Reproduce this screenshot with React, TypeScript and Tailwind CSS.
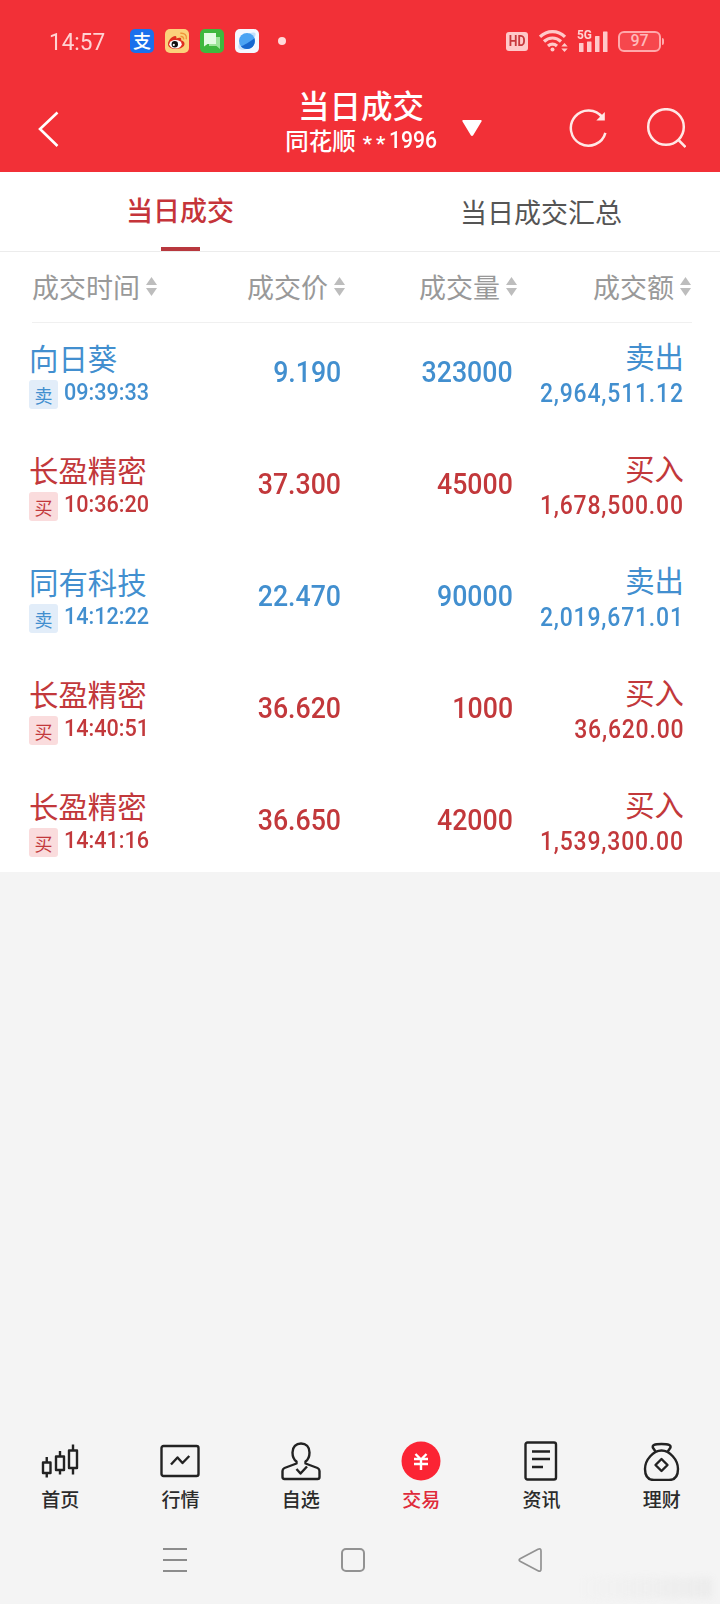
import React from 'react';
import clsx from 'clsx';

type Side = 'buy' | 'sell';

interface Trade {
  name: string;
  side: Side;
  time: string;
  price: string;
  volume: string;
  amount: string;
}

const trades: Trade[] = [
  { name: '向日葵', side: 'sell', time: '09:39:33', price: '9.190', volume: '323000', amount: '2,964,511.12' },
  { name: '长盈精密', side: 'buy', time: '10:36:20', price: '37.300', volume: '45000', amount: '1,678,500.00' },
  { name: '同有科技', side: 'sell', time: '14:12:22', price: '22.470', volume: '90000', amount: '2,019,671.01' },
  { name: '长盈精密', side: 'buy', time: '14:40:51', price: '36.620', volume: '1000', amount: '36,620.00' },
  { name: '长盈精密', side: 'buy', time: '14:41:16', price: '36.650', volume: '42000', amount: '1,539,300.00' },
];

const StatusBar = () => (
  <div className="flex h-[82px] items-center pl-[49px] pr-[56px] text-[#ffd3d3]">
    <span className="w-[81px] font-[Roboto] text-2xl leading-6">
      <span className="inline-block origin-left scale-x-[0.94] pt-px">14:57</span>
    </span>

    {/* Notification icons */}
    <div className="flex items-center gap-[11px]">
      <span className="flex h-6 w-6 items-center justify-center rounded-[5px] bg-[#1b70ec] text-[18px] leading-6 font-medium text-white">
        <span className="-mt-0.5">支</span>
      </span>
      <svg className="h-6 w-6" viewBox="0 0 24 24">
        <rect width="24" height="24" rx="5" fill="#fbd27b" />
        <path d="M3 15c0-4 5-8.500 7.500-8 1.300.3 1 2 .8 2.500 2-1 5-1.300 5 .5 0 .8-.3 1.200-.3 1.200 2 .5 3.500 1.500 3.500 3.600 0 3.200-4 5.200-8.500 5.200S3 18.200 3 15Z" fill="#e0301e" />
        <ellipse cx="10.500" cy="15.200" rx="6.200" ry="4.200" fill="#fff" />
        <circle cx="9.800" cy="15.200" r="3.200" fill="#111" />
        <circle cx="8.800" cy="15.900" r="1.100" fill="#fff" />
        <path d="M15.500 7.500c2-.4 3.500 1 3 3M15.300 4.300c4-.8 7 2.200 6 6" fill="none" stroke="#f0953a" strokeWidth="1.500" />
      </svg>
      <svg className="h-6 w-6" viewBox="0 0 24 24">
        <rect width="24" height="24" rx="5" fill="#3fb83e" />
        <path d="M9 8h11v12l-3.500-3H9Z" fill="#9ee59a" />
        <path d="M4 4h12v11H7.500L4 17.500Z" fill="#e4fbe3" />
      </svg>
      <svg className="h-6 w-6" viewBox="0 0 24 24">
        <rect width="24" height="24" rx="5" fill="#f4f8ff" />
        <path d="M4 19.500C2.500 18 3.500 15.500 5 13.500L12 20c-3 1.200-6.500 1-8-.5ZM14 4.500c3-1.500 6-1.500 6.500 0 .4 1.500-.3 3-1.500 5Z" fill="#c5e0fb" />
        <circle cx="12" cy="12" r="8" fill="#4ba3f3" />
        <path d="M6 17.300C12 15 17 11 19.400 9.200 21 14 18 20 12 20c-2.500 0-4.700-1-6-2.700Z" fill="#1767cf" />
      </svg>
      <span className="ml-[8px] h-2 w-2 rounded-full bg-[#ffdada]" />
    </div>

    {/* Network and battery */}
    <div className="ml-auto flex items-center">
      <span className="mr-[11px] flex h-[19px] w-[22px] items-center justify-center rounded-[3px] bg-[#ffc9c9] font-[Roboto] text-[15px] leading-none font-bold text-[#c8383d]">
        <span className="scale-x-[0.82]">HD</span>
      </span>
      <svg className="mr-[9px] h-6 w-[29px]" viewBox="0 0 29 24" fill="none" stroke="#ffc9c9" strokeWidth="3.200">
        <path d="M1 7.800c7-7 18-7 25 0M5 12.500c5-4.700 12-4.700 17 0M9 17c3-2.600 6-2.600 9 0" />
        <circle cx="13.500" cy="20.500" r="2" fill="#ffc9c9" stroke="none" />
        <path d="M22.300 17.500 25.500 14l3.200 3.500ZM22.300 19.500l3.200 3.500 3.200-3.500Z" fill="#ffc9c9" stroke="none" />
      </svg>
      <div className="relative mr-[10px] h-6 w-[31px]">
        <span className="absolute -top-px left-0 origin-left scale-x-[0.88] font-[Roboto] text-[13.500px] leading-3 font-bold">5G</span>
        <svg className="h-6 w-[31px]" viewBox="0 0 31 24" fill="#ffc9c9">
          <rect x="2" y="14" width="4.500" height="9" rx="0.500" />
          <rect x="10" y="12.500" width="4.500" height="10.500" rx="0.500" />
          <rect x="18" y="7" width="4.500" height="16" rx="0.500" />
          <rect x="26" y="2.500" width="4.500" height="20.500" rx="0.500" />
        </svg>
      </div>
      <span className="flex h-[21px] w-[43px] items-center justify-center rounded-[6px] border-2 border-[#ffa9ab] bg-[#f6474d] font-[Roboto] text-[16px] leading-none font-medium text-[#ffb9bb]">
        97
      </span>
      <span className="ml-px h-[7px] w-0.5 rounded-r bg-[#ffa9ab]" />
    </div>
  </div>
);

const TitleBar = () => (
  <div className="flex h-[90px] items-center pr-8 pl-[37px] text-white">
    <svg className="mt-[3px] h-9 w-6 shrink-0" viewBox="0 0 24 36" fill="none" stroke="#fff" strokeWidth="2.600">
      <path d="M20.500 1.500 3 18l17.500 17" />
    </svg>
    <div className="ml-[220px] flex w-[160px] shrink-0 flex-col items-center self-start pt-[3px]">
      <h1 className="text-[31.500px] leading-[38px] font-medium">当日成交</h1>
      <p className="mt-[3px] flex h-7 items-center gap-[7px] whitespace-nowrap text-[23.500px] leading-7 font-medium">
        <span>同花顺</span>
        <span className="flex w-[74px] items-center font-[Roboto]">
          <span className="mt-2 w-[27px] text-[21px] tracking-[4px]">**</span>
          <span className="origin-left scale-x-[0.88] text-2xl">1996</span>
        </span>
      </p>
    </div>
    <svg className="mt-[2px] ml-[21px] h-4 w-5 shrink-0" viewBox="0 0 20 16" fill="#fff">
      <path d="M1.500 0h17c1 0 1.500.8 1 1.600l-8.300 13.600c-.6 1-1.800 1-2.400 0L.5 1.600C0 .8.500 0 1.500 0Z" />
    </svg>
    <svg className="mt-[2px] ml-[86px] h-10 w-10 shrink-0" viewBox="0 0 40 40" fill="none" stroke="#ffe8e6" strokeWidth="2.500">
      <path d="M37.400 24.800A17.600 17.600 0 1 1 34.500 9.500" />
      <path d="M36.800 4v8.500h-8.500Z" fill="#ffe8e6" stroke="none" />
    </svg>
    <svg className="mt-[2px] ml-[38px] h-10 w-10 shrink-0" viewBox="0 0 40 40" fill="none" stroke="#ffe8e6" strokeWidth="2.500">
      <circle cx="20" cy="19" r="17.800" />
      <path d="m32 31.500 7.500 7.500" />
    </svg>
  </div>
);

const SortIcon = () => (
  <svg className="mb-[2px] ml-[6px] h-[19px] w-[11px]" viewBox="0 0 11 19" fill="#bdbdbd">
    <path d="M5.500 0 11 8H0ZM5.500 19 11 11H0Z" />
  </svg>
);

const ColumnTitle = ({ label }: { label: string }) => (
  <span className="flex items-center justify-end">
    <span>{label}</span>
    <SortIcon />
  </span>
);

const TradeRow = ({ trade }: { trade: Trade }) => {
  const sell = trade.side === 'sell';

  return (
    <li
      className={clsx(
        'grid h-[101px] grid-cols-[148px_164px_172px_171px] pl-[29px]',
        sell ? 'text-[#428fcf]' : 'text-[#c2383b]',
      )}
    >
      <div className="pt-[15px]">
        <div className="text-[29.400px] leading-[38px] whitespace-nowrap">{trade.name}</div>
        <div className="flex">
          <span
            className={clsx(
              'mt-[4px] flex h-[29px] w-[29px] shrink-0 items-center justify-center rounded-[3px] text-[18px] leading-none',
              sell ? 'bg-[#e2edf9]' : 'bg-[#fadcdd]',
            )}
          >
            {sell ? '卖' : '买'}
          </span>
          <span className="mt-[3px] ml-[6px] origin-left scale-x-[0.9] font-[Roboto] text-2xl leading-[27px] font-medium">
            {trade.time}
          </span>
        </div>
      </div>
      <div className="pt-[32px] text-right font-[Roboto] text-[29.500px] leading-[34px] font-medium">
        <span className="inline-block origin-right scale-x-[0.905]">{trade.price}</span>
      </div>
      <div className="pt-[32px] text-right font-[Roboto] text-[29.500px] leading-[34px] font-medium">
        <span className="inline-block origin-right scale-x-[0.905]">{trade.volume}</span>
      </div>
      <div className="pt-[13px] text-right">
        <div className="text-[29.400px] leading-[38px]">{sell ? '卖出' : '买入'}</div>
        <div className="pt-[2px] font-[Roboto] text-[25.500px] leading-[34px] font-medium">
          <span className="inline-block origin-right scale-x-[0.9] tracking-[0.900px]">{trade.amount}</span>
        </div>
      </div>
    </li>
  );
};

const iconProps = {
  className: 'h-10 w-10',
  viewBox: '0 0 40 40',
  fill: 'none',
  stroke: '#222',
  strokeWidth: 2.4,
  strokeLinejoin: 'round' as const,
};

const navItems = [
  {
    label: '首页',
    icon: (
      <svg {...iconProps}>
        <path d="M3 21.500h7.500V32H3ZM6.750 16v5.500M6.750 32v4.500M16 15.500h8V29h-8ZM20 10v5.500M20 29v4.500M29 9.500h8V27h-8ZM33 3.500v6M33 27v6.500" />
      </svg>
    ),
  },
  {
    label: '行情',
    icon: (
      <svg {...iconProps}>
        <rect x="1.500" y="5" width="37" height="30" rx="2" />
        <path d="m11 23.500 6.500-7 5 5.500 6.800-7" />
      </svg>
    ),
  },
  {
    label: '自选',
    icon: (
      <svg {...iconProps}>
        <path d="M15.500 20.500c-3-2-4-5-4-9 0-5.500 3.500-9 8.500-9s8.500 3.500 8.500 9c0 4-1 7-4 9v2l12 4.500c1.300.6 2 1.500 2 3V36c0 1.200-.5 2-2 2h-33c-1.500 0-2-.8-2-2v-6c0-1.500.7-2.400 2-3l12-4.500Z" />
        <path d="m15.500 28 4 4.500 6.500-7" />
      </svg>
    ),
  },
  {
    label: '交易',
    active: true,
    icon: (
      <svg {...iconProps}>
        <circle cx="20" cy="20" r="19.500" fill="#fb2434" stroke="none" />
        <path d="m14.500 13 5.500 5.500 5.500-5.500M13 18h14M13 23h14M20 18V29" stroke="#fff" />
      </svg>
    ),
  },
  {
    label: '资讯',
    icon: (
      <svg {...iconProps}>
        <rect x="4.500" y="1.500" width="30.500" height="37" rx="2" />
        <path d="M11 10.500H29M11 18H29M11 26H22" />
      </svg>
    ),
  },
  {
    label: '理财',
    icon: (
      <svg {...iconProps}>
        <path d="m13.500 10.500-2.700-4C10.300 4 12 3 19.500 3s9.500 1 9 3.500l-2.700 4" />
        <path d="M19.500 9.500c-8 0-16.500 9-16.500 18.500 0 8 4 11 9 11h15c5 0 9-3 9-11C36 18.500 27.500 9.500 19.500 9.500Z" />
        <path d="m19.500 18 6 6-6 6-6-6Z" />
      </svg>
    ),
  },
];

const App = () => {
  return (
    <div className="flex h-[1604px] w-[720px] flex-col overflow-hidden bg-[#f4f4f4] font-['Noto_Sans_CJK_SC',sans-serif]">
      <header className="h-[172px] shrink-0 bg-[#f23037]">
        <StatusBar />
        <TitleBar />
      </header>

      <main className="bg-white">
        {/* Tabs */}
        <div className="grid h-[80px] grid-cols-2 border-b border-[#ececec] text-[27px]">
          <button className="flex flex-col items-center justify-between pt-[18px] font-medium text-[#c5343a]">
            <span className="leading-10">当日成交</span>
            <span className="h-1 w-[39px] bg-[#b8383e]" />
          </button>
          <button className="flex justify-center pt-[20px] pl-[2px] leading-10 text-[#555]">当日成交汇总</button>
        </div>

        {/* Column titles */}
        <div className="mr-7 ml-8 grid h-[71px] grid-cols-[125px_188px_172px_174px] border-b border-[#f0f0f0] text-[27px] text-[#999]">
          <ColumnTitle label="成交时间" />
          <ColumnTitle label="成交价" />
          <ColumnTitle label="成交量" />
          <ColumnTitle label="成交额" />
        </div>

        <ul className="flex flex-col gap-[11px]">
          {trades.map((trade) => (
            <TradeRow key={trade.time} trade={trade} />
          ))}
        </ul>
      </main>

      <nav className="mt-auto grid h-[95px] w-[722px] shrink-0 grid-cols-6">
        {navItems.map((item) => (
          <button key={item.label} className="flex flex-col items-center">
            {item.icon}
            <span
              className={clsx(
                'mt-[4px] text-[19px] leading-7 font-medium',
                item.active ? 'text-[#e02a3a]' : 'text-[#2b2b2b]',
              )}
            >
              {item.label}
            </span>
          </button>
        ))}
      </nav>

      {/* System navigation */}
      <div className="relative flex h-[68px] shrink-0 items-start pt-[11px] pl-[163px]">
        <svg className="h-[26px] w-6" viewBox="0 0 24 26" stroke="#8c8c8c" strokeWidth="1.800">
          <path d="M0 2h24M0 13h24M0 24h24" />
        </svg>
        <span className="mt-px ml-[154px] h-6 w-6 rounded-[5px] border-2 border-[#929292]" />
        <svg className="ml-[153px] h-[26px] w-6" viewBox="0 0 24 26" fill="none" stroke="#929292" strokeWidth="1.700" strokeLinejoin="round">
          <path d="M2.500 11.500 20 2.300c2-1 3-.5 3 1.700v18c0 2.200-1 2.700-3 1.700L2.500 14.500c-1.800-1-1.800-2 0-3Z" />
        </svg>
        <span className="absolute right-2 bottom-1.5 h-5 w-[136px] bg-linear-to-r from-transparent to-[#ececec] blur-[3px]" />
      </div>
    </div>
  );
};

export default App;
